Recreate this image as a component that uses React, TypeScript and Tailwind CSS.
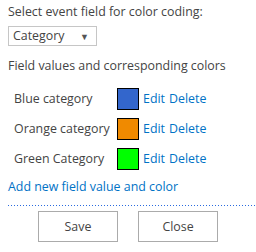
const rows = [
  { name: 'Blue category', color: 'bg-[#3366cc]' },
  { name: 'Orange category', color: 'bg-[#f08a00]' },
  { name: 'Green Category', color: 'bg-[#00ff00]' },
];

export default function App() {
  return (
    <div className="w-[256px] h-[252px] bg-white text-[12.4px] leading-[18px] text-[#444444] font-['Open_Sans',sans-serif] overflow-hidden">
      <div className="pt-[3px] pl-2">Select event field for color coding:</div>
      <div className="ml-2 mt-[5px] w-[89px] h-[20px] border border-[#c6c6c6] flex items-center pl-[4px] pr-[7px]">
        <span className="flex-1">Category</span>
        <span className="text-[9px] leading-none text-[#555555]">▼</span>
      </div>
      <div className="pl-2 mt-[11px]">Field values and corresponding colors</div>
      <div className="mt-[13px] flex flex-col gap-[8px]">
        {rows.map((row) => (
          <div key={row.name} className="flex items-center h-[22px] pl-[14px]">
            <span className="w-[103px]">{row.name}</span>
            <span className={`w-[22px] h-[22px] border border-black ${row.color}`} />
            <a className="ml-[4px] text-[#0072c6]">Edit</a>
            <a className="ml-[4px] text-[#0072c6]">Delete</a>
          </div>
        ))}
      </div>
      <div className="pl-2 mt-[8px] text-[#0072c6]">Add new field value and color</div>
      <div className="ml-2 mt-[9px] h-px bg-[repeating-linear-gradient(to_right,#2a6be0_0_1px,transparent_1px_3px)]" />
      <div className="mt-[5px] flex justify-center gap-[20px]">
        <button className="w-[80px] h-[31px] border border-[#ababab] bg-white text-[#444444]">Save</button>
        <button className="w-[80px] h-[31px] border border-[#ababab] bg-white text-[#444444]">Close</button>
      </div>
    </div>
  );
}
